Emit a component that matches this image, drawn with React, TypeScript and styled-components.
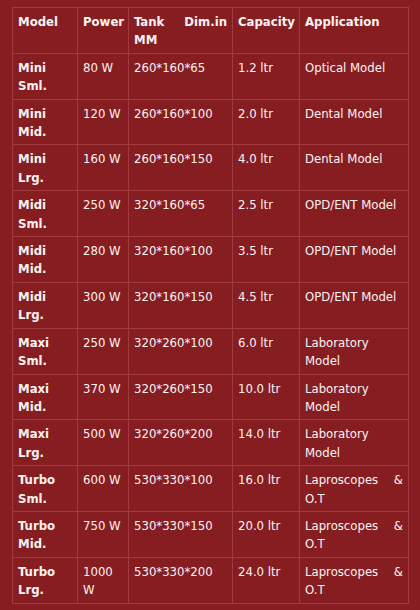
import React from "react";
import styled, { createGlobalStyle } from "styled-components";

const Global = createGlobalStyle`
  html, body { margin: 0; padding: 0; background: #861d21; }
  body { font-family: "DejaVu Sans Condensed", "DejaVu Sans", Tahoma, sans-serif; }
`;

const Page = styled.div`
  padding: 7px 12px;
  background: #861d21;
  min-height: 610px;
  box-sizing: border-box;
`;

const Table = styled.table`
  width: 396px;
  table-layout: fixed;
  border-collapse: collapse;
  border: 1px solid #a53b3e;
  color: #fbf3f3;
  font-size: 13px;
  line-height: 18.4px;
`;

const Cell = styled.td<{ $bold?: boolean }>`
  border: 1px solid #a13a3d;
  padding: 5px 5px 3px;
  vertical-align: top;
  text-align: justify;
  font-weight: ${(p) => (p.$bold ? "bold" : "normal")};
`;

const Head = styled.th`
  border: 1px solid #a13a3d;
  padding: 5px 5px 3px;
  vertical-align: top;
  text-align: justify;
  text-align-last: left;
  font-weight: bold;
`;

const cols = [65, 51, 104, 67, 109];

const rows: [string, string, string, string, string][] = [
  ["Mini Sml.", "80 W", "260*160*65", "1.2 ltr", "Optical Model"],
  ["Mini Mid.", "120 W", "260*160*100", "2.0 ltr", "Dental Model"],
  ["Mini Lrg.", "160 W", "260*160*150", "4.0 ltr", "Dental Model"],
  ["Midi Sml.", "250 W", "320*160*65", "2.5 ltr", "OPD/ENT Model"],
  ["Midi Mid.", "280 W", "320*160*100", "3.5 ltr", "OPD/ENT Model"],
  ["Midi Lrg.", "300 W", "320*160*150", "4.5 ltr", "OPD/ENT Model"],
  ["Maxi Sml.", "250 W", "320*260*100", "6.0 ltr", "Laboratory Model"],
  ["Maxi Mid.", "370 W", "320*260*150", "10.0 ltr", "Laboratory Model"],
  ["Maxi Lrg.", "500 W", "320*260*200", "14.0 ltr", "Laboratory Model"],
  ["Turbo Sml.", "600 W", "530*330*100", "16.0 ltr", "Laproscopes & O.T"],
  ["Turbo Mid.", "750 W", "530*330*150", "20.0 ltr", "Laproscopes & O.T"],
  ["Turbo Lrg.", "1000 W", "530*330*200", "24.0 ltr", "Laproscopes & O.T"],
];

export default function App() {
  return (
    <Page>
      <Global />
      <Table>
        <colgroup>
          {cols.map((w, i) => (
            <col key={i} style={{ width: w }} />
          ))}
        </colgroup>
        <thead>
          <tr>
            <Head>Model</Head>
            <Head>Power</Head>
            <Head>Tank Dim.in MM</Head>
            <Head>Capacity</Head>
            <Head>Application</Head>
          </tr>
        </thead>
        <tbody>
          {rows.map((r, i) => (
            <tr key={i}>
              <Cell $bold>{r[0]}</Cell>
              <Cell>{r[1]}</Cell>
              <Cell>{r[2]}</Cell>
              <Cell>{r[3]}</Cell>
              <Cell>{r[4]}</Cell>
            </tr>
          ))}
        </tbody>
      </Table>
    </Page>
  );
}
